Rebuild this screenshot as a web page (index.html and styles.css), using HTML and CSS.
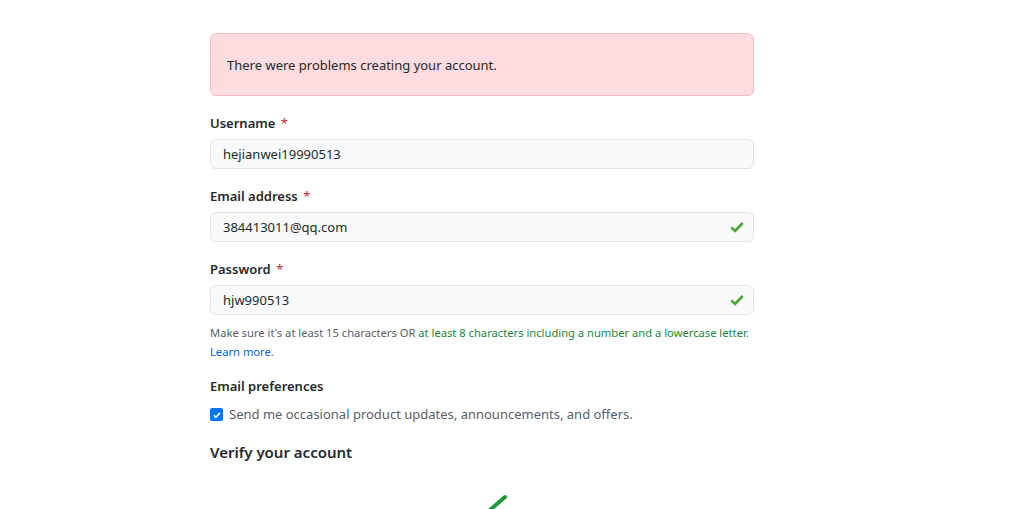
FILE: index.html
```html
<!DOCTYPE html>
<html>
<head>
<meta charset="utf-8">
<link rel="stylesheet" href="styles.css">
</head>
<body>
<div class="form">
  <div class="flash">There were problems creating your account.</div>

  <div class="group">
    <label class="label">Username <span class="req">*</span></label>
    <div class="input">hejianwei19990513</div>
  </div>

  <div class="group">
    <label class="label">Email address <span class="req">*</span></label>
    <div class="input">384413011@qq.com
      <svg class="ok" viewBox="0 0 16 16" width="16" height="16"><path d="M2.3 8.4l3.8 3.6 7.6-8" fill="none" stroke="#4aa43a" stroke-width="2.6" stroke-linejoin="miter"/></svg>
    </div>
  </div>

  <div class="group">
    <label class="label">Password <span class="req">*</span></label>
    <div class="input">hjw990513
      <svg class="ok" viewBox="0 0 16 16" width="16" height="16"><path d="M2.3 8.4l3.8 3.6 7.6-8" fill="none" stroke="#4aa43a" stroke-width="2.6" stroke-linejoin="miter"/></svg>
    </div>
    <p class="note">Make sure it's at least 15 characters OR <span class="good">at least 8 characters including a number and a lowercase letter.</span><br><a class="link" href="#">Learn more</a>.</p>
  </div>

  <div class="group prefs">
    <label class="label">Email preferences</label>
    <div class="check-row">
      <span class="box"><svg viewBox="0 0 12 12" width="10" height="10"><path d="M2.2 6.3l2.4 2.4 5-5.2" fill="none" stroke="#fff" stroke-width="2"/></svg></span>
      <span class="check-text">Send me occasional product updates, announcements, and offers.</span>
    </div>
  </div>

  <h2 class="verify">Verify your account</h2>
  <div class="captcha">
    <svg width="60" height="20" viewBox="0 0 60 20"><path d="M40 20 L55 7" stroke="#1f9a3a" stroke-width="4" stroke-linecap="round"/></svg>
  </div>
</div>
</body>
</html>
```
FILE: styles.css
```css
html, body {
  margin: 0;
  padding: 0;
  background: #fff;
  overflow: hidden;
}
body {
  font-family: "Noto Sans", "Liberation Sans", sans-serif;
  color: #24292e;
  font-size: 13px;
  height: 509px;
}
.form {
  width: 544px;
  margin-left: 210px;
  padding-top: 33px;
}
.flash {
  box-sizing: border-box;
  height: 63px;
  padding: 0 16px;
  display: flex;
  align-items: center;
  background: #ffdce0;
  border: 1px solid #f3b9c0;
  border-radius: 6px;
  font-size: 13px;
  color: #24292e;
}
.group {
  margin-top: 17px;
}
.label {
  display: block;
  font-weight: 600;
  font-size: 13px;
  line-height: 21px;
  margin-bottom: 5px;
}
.req {
  color: #cb2431;
  font-weight: 400;
  margin-left: 2px;
}
.input {
  box-sizing: border-box;
  height: 30px;
  border: 1px solid #e1e4e8;
  border-radius: 6px;
  background: #f8f9fb;
  padding: 0 8px 0 12px;
  display: flex;
  align-items: center;
  justify-content: space-between;
  font-size: 13px;
  color: #24292e;
}
.ok {
  display: block;
}
.note {
  margin: 8px 0 0;
  font-size: 11.2px;
  line-height: 19px;
  color: #586069;
}
.good {
  color: #22863a;
}
.link {
  color: #0366d6;
  text-decoration: none;
}
.prefs {
  margin-top: 15px;
}
.check-row {
  display: flex;
  align-items: center;
  gap: 6px;
  margin-top: 7px;
  line-height: 21px;
}
.box {
  width: 13px;
  height: 13px;
  border-radius: 2px;
  background: #0075ff;
  display: flex;
  align-items: center;
  justify-content: center;
}
.box svg { display: block; }
.check-text {
  color: #586069;
  font-size: 13px;
}
.verify {
  margin: 15px 0 0;
  font-size: 15px;
  font-weight: 600;
  line-height: 24px;
}
.captcha {
  padding-left: 240px;
  margin-top: 26px;
}
.captcha svg { display: block; }
```
